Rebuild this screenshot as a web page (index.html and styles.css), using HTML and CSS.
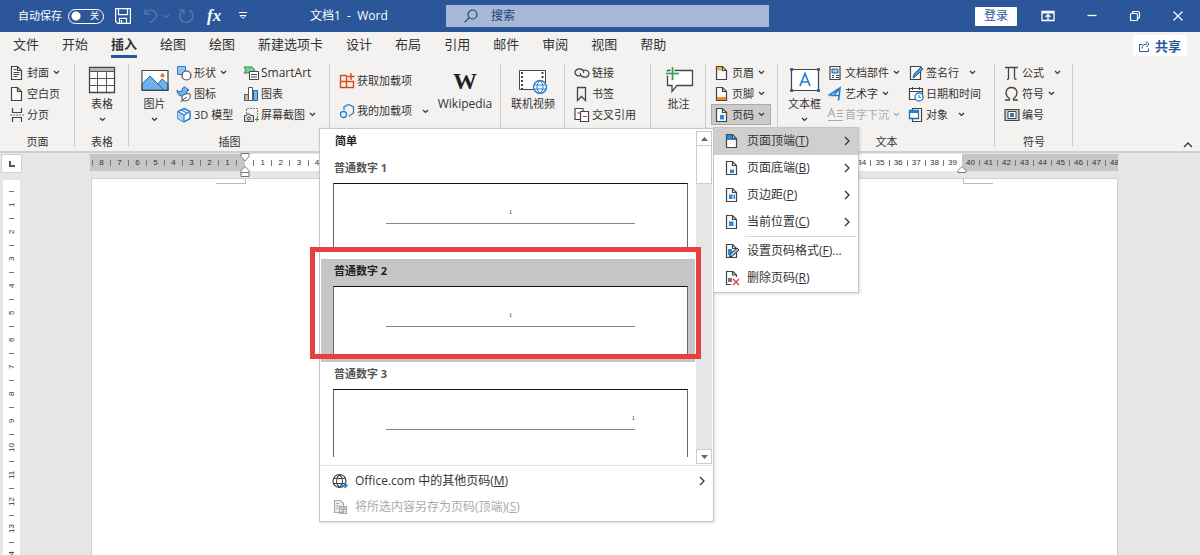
FILE: index.html
```html
<!DOCTYPE html>
<html lang="zh-CN">
<head>
<meta charset="utf-8">
<title>文档1 - Word</title>
<link rel="stylesheet" href="styles.css">
</head>
<body>
<svg class="defs" aria-hidden="true">
  <symbol id="chev" viewBox="0 0 7 5"><path d="M1 1l2.500 2.500L6 1" fill="none" stroke="currentColor" stroke-width="1.200"/></symbol>
  <symbol id="arrow" viewBox="0 0 6 10"><path d="M1 1l4 4-4 4" fill="none" stroke="#333" stroke-width="1.300"/></symbol>
  <symbol id="sheet" viewBox="0 0 16 16"><path d="M2.500 1.500h6l4 4v9h-10z" fill="#fafafa" stroke="#444" stroke-width="1.200"/><path d="M8.500 1.500v4h4" fill="none" stroke="#444" stroke-width="1.200"/></symbol>
</svg>

<header class="titlebar">
  <div class="quick">
    <label class="autosave"><span>自动保存</span><span class="switch"><input type="checkbox" role="switch"><span>关</span></span></label>
    <button class="save" aria-label="保存"><svg width="16" height="16" viewBox="0 0 16 16" fill="none" stroke="#fff" stroke-width="1.200"><path d="M.6.600h14.800v14.800H2.600l-2-2zM3.500.600v6h9v-6M4.500 15.400v-5h7v5M6.500 12v3"/></svg></button>
    <button class="undo" aria-label="撤消"><svg width="16" height="16" viewBox="0 0 16 16" fill="none" stroke="#5076b1" stroke-width="1.500"><path d="M2 1v5h5M2 6c2-4 7-5 10-2 4 4 0 7-5 11"/></svg><svg width="7" height="5" color="#5076b1"><use href="#chev"/></svg></button>
    <button class="redo" aria-label="重复"><svg width="16" height="16" viewBox="0 0 16 16" fill="none" stroke="#5076b1" stroke-width="1.500"><path d="M1 2h5v5M11 2a6.500 6.500 0 1 1-7 1l2-1"/></svg></button>
    <button class="fx" aria-label="公式"><i>fx</i></button>
    <button aria-label="自定义快速访问工具栏"><svg width="8" height="8" viewBox="0 0 8 8" fill="none" stroke="#fff"><path d="M0 .5h8M1 3.500h6L4 6.500z"/></svg></button>
  </div>
  <h1 class="doc-title">文档1&nbsp; -&nbsp; Word</h1>
  <label class="search"><svg width="14" height="14" viewBox="0 0 14 14" fill="none" stroke="#1f3f75" stroke-width="1.200"><circle cx="8.500" cy="5.500" r="4.500"/><path d="M5.300 8.700L.6 13.400"/></svg><input type="text" placeholder="搜索" aria-label="搜索"></label>
  <div class="window">
    <button class="login">登录</button>
    <button aria-label="功能区显示选项"><svg width="14" height="12" viewBox="0 0 14 12"><path d="M1 1.500h12v9H1z" fill="none" stroke="#fff" stroke-width="1.300"/><path d="M1 1h12v2.500H1z" fill="#fff"/><path d="M7 10V5M4.500 7L7 4.800 9.500 7" fill="none" stroke="#fff" stroke-width="1.400"/></svg></button>
    <button aria-label="最小化"><svg width="12" height="12" viewBox="0 0 12 12"><path d="M1.500 5.500h9" stroke="#fff" stroke-width="1.300"/></svg></button>
    <button aria-label="还原"><svg width="12" height="12" viewBox="0 0 12 12" fill="none" stroke="#fff" stroke-width="1.200"><rect x="1.500" y="3.500" width="7" height="7" rx="1"/><path d="M3.500 3V2.500q0-1 1-1H9q1.500 0 1.500 1.500v4q0 1-1.500 1.500"/></svg></button>
    <button aria-label="关闭"><svg width="12" height="12" viewBox="0 0 12 12" stroke="#fff" stroke-width="1.200"><path d="M1.500 1.500l9 9M10.500 1.500l-9 9"/></svg></button>
  </div>
</header>

<nav class="tabs">
  <button>文件</button><button>开始</button><button class="active">插入</button><button>绘图</button><button>绘图</button><button>新建选项卡</button><button>设计</button><button>布局</button><button>引用</button><button>邮件</button><button>审阅</button><button>视图</button><button>帮助</button>
  <button class="share"><svg width="12" height="12" viewBox="0 0 12 12" fill="none" stroke="#2b579a"><path d="M3.500 4.500h-3v7h9v-3M3 8.500c0-3 2-4.500 5-4.500M6.500 1.500L10 4 7.500 7"/></svg>共享</button>
</nav>

<section class="ribbon">
  <div class="group">
    <div class="body">
      <div class="col inset">
        <button class="row"><svg viewBox="0 0 16 16"><use href="#sheet"/><path d="M4.500 4.500h3M4.500 7.500h6M4.500 9.500h6M4.500 11.500h4" stroke="#444"/></svg>封面<svg class="chev"><use href="#chev"/></svg></button>
        <button class="row"><svg viewBox="0 0 16 16"><use href="#sheet"/></svg>空白页</button>
        <button class="row"><svg viewBox="0 0 16 16" fill="none" stroke="#444" stroke-width="1.200"><path d="M3.500 1v4.500h9V1M3.500 15v-4.500h9V15"/><path d="M1 8h15" stroke="#2b7fc9" stroke-dasharray="2 1"/></svg>分页</button>
      </div>
    </div>
    <div class="caption">页面</div>
  </div>
  <div class="group">
    <div class="body">
      <button class="big"><svg width="28" height="28" viewBox="0 0 28 28"><path d="M1.500 1.500h25v25h-25z" fill="#fff" stroke="#444" stroke-width="1.300"/><path d="M2 2h24v3.500H2z" fill="#b5b5b5"/><path d="M1.500 5.500h25M1.500 12.500h25M1.500 19.500h25M9.500 5.500v21M18.500 5.500v21" stroke="#555"/></svg>表格<svg class="chev"><use href="#chev"/></svg></button>
    </div>
    <div class="caption">表格</div>
  </div>
  <div class="group">
    <div class="body">
      <button class="big narrow"><svg width="28" height="28" viewBox="0 0 28 28"><path d="M1 4.500h26v20H1z" fill="#fff"/><path d="M1 18l8-8 8 8 4-5 6 5v6H1z" fill="#6fb1ea" stroke="#1f6bb0"/><path d="M15 16l8 8" stroke="#1f6bb0"/><path d="M1 4.500h26v20H1z" fill="none" stroke="#444" stroke-width="1.200"/><circle cx="21.500" cy="9.500" r="2" fill="#e8762d"/></svg>图片<svg class="chev"><use href="#chev"/></svg></button>
      <div class="col shapes">
        <button class="row"><svg viewBox="0 0 16 16"><path d="M1.500 1.500h8v8h-8z" fill="#8ec3ee" stroke="#2b7fc9"/><circle cx="10.500" cy="10.500" r="4.500" fill="#fff" stroke="#444" stroke-width="1.200"/></svg>形状<svg class="chev"><use href="#chev"/></svg></button>
        <button class="row"><svg viewBox="0 0 16 16"><path d="M1 4c2 2 4 2 5 1 0-5 4-5 5-2l2 1-2 1c0 4-3 5-6 5-3-1-4-4-4-6z" fill="#6fb1ea" stroke="#2067a8"/><path d="M6 14c-1-5 3-7 8-6 1 5-2 8-7 6.500zM5 16c2-3 4-4 6-5" fill="#fff" stroke="#444"/></svg>图标</button>
        <button class="row"><svg viewBox="0 0 16 16"><path d="M8 1.500l6 3v7l-6 3.500-6-3.500v-7z" fill="#fff" stroke="#2b7fc9" stroke-width="1.500"/><path d="M2 4.500L8 8v7L2 11.500z" fill="#a9d2f3"/><path d="M2 4.500L8 8l6-3.500M8 8v7M5 3l6 3" fill="none" stroke="#2b7fc9" stroke-width="1.200"/></svg>3D 模型</button>
      </div>
      <div class="col">
        <button class="row latin"><svg viewBox="0 0 16 16"><path d="M1 2h8l3 3-3 3H1l2-3z" fill="#7fcf9a" stroke="#2c8a4b"/><path d="M6.500 6.500h9v8h-9z" fill="#fff" stroke="#444"/><path d="M8 9.500h6M8 12h6" stroke="#444"/></svg>SmartArt</button>
        <button class="row"><svg viewBox="0 0 16 16"><path d="M1.500 8.500h4v6h-4z" fill="#bbb" stroke="#555"/><path d="M5.500 1.500h4v13h-4z" fill="#fff" stroke="#555"/><path d="M10.500 4.500h4v10h-4z" fill="#6fb1ea" stroke="#2067a8"/></svg>图表</button>
        <button class="row"><svg viewBox="0 0 16 16" fill="none"><path d="M3.500 7V1.500h11V13" stroke="#777" stroke-dasharray="2 1"/><path d="M1.500 8.500h2l1-1.500h2l1 1.500h3v6h-9z" fill="#ddd" stroke="#444"/><circle cx="6" cy="11.500" r="1.500" stroke="#444"/><path d="M12 12.500h4M14 10.500v4" stroke="#2c8a4b"/></svg>屏幕截图<svg class="chev"><use href="#chev"/></svg></button>
      </div>
    </div>
    <div class="caption">插图</div>
  </div>
  <div class="group">
    <div class="body">
      <div class="col loose inset">
        <button class="row"><svg viewBox="0 0 16 16" fill="none" stroke="#d8491c" stroke-width="1.400"><path d="M8 2.500H1.500v12h13V8M1.500 8.500h13M7.500 2.500v12"/><path d="M12 0v7M8.500 3.500h7"/></svg>获取加载项</button>
        <button class="row"><svg viewBox="0 0 16 16" fill="none" stroke="#2b7fc9" stroke-width="1.300"><path d="M5 7V4l4.500-2.500L14.500 4v6L10 13"/><circle cx="4.500" cy="11.500" r="3"/></svg>我的加载项<svg class="chev far"><use href="#chev"/></svg></button>
      </div>
      <button class="big wiki latin"><span class="w">W</span>Wikipedia</button>
    </div>
  </div>
  <div class="group">
    <div class="body">
      <button class="big"><svg width="30" height="28" viewBox="0 0 30 28"><path d="M1.500 4.500h26v19h-26z" fill="#fff" stroke="#444"/><path d="M4 6v17M24.500 6v8" stroke="#444" stroke-width="2" stroke-dasharray="2 2"/><circle cx="22" cy="21" r="6.500" fill="#fff" stroke="#2b7fc9" stroke-width="1.400"/><path d="M22 14.500c-4 4-4 9 0 13 4-4 4-9 0-13M16 19h12M16 23h12" fill="none" stroke="#2b7fc9"/></svg>联机视频</button>
    </div>
  </div>
  <div class="group">
    <div class="body">
      <div class="col inset">
        <button class="row"><svg viewBox="0 0 16 16" fill="none" stroke="#444" stroke-width="1.300"><path d="M7 10.500c-3 1-6-.5-6-3s3-4 5.500-3.500S10 6.500 9.500 8M8.500 5.500c3-1 6.500 0 6.500 3s-3 4-5.500 3.500S6 9.500 6.500 8"/></svg>链接</button>
        <button class="row"><svg viewBox="0 0 16 16" fill="none" stroke="#444" stroke-width="1.300"><path d="M3.500 1.500h8v13l-4-4-4 4z"/></svg>书签</button>
        <button class="row"><svg viewBox="0 0 16 16" fill="#fff" stroke="#444" stroke-width="1.200"><path d="M1 1.500h8v11H1z"/><path d="M6.500 4.500h8v10h-8z"/><path d="M3 6h3M9 9.500h4" stroke="#d13438"/></svg>交叉引用</button>
      </div>
    </div>
  </div>
  <div class="group">
    <div class="body">
      <button class="big"><svg width="30" height="28" viewBox="0 0 30 28"><path d="M3.500 4.500h25v15H13l-5 6v-6H3.500z" fill="#fff" stroke="#444" stroke-width="1.300"/><path d="M8.500 0v15M1 7.500h15" stroke="#f3f2f1" stroke-width="4"/><path d="M8.500 1v13M2 7.500h13" stroke="#2ca04b" stroke-width="1.600"/></svg>批注</button>
    </div>
  </div>
  <div class="group">
    <div class="body">
      <div class="col menus">
        <button class="row"><svg viewBox="0 0 16 16"><use href="#sheet"/><path d="M3 2h5v3.500H3z" fill="#f3ae4b"/></svg>页眉<svg class="chev"><use href="#chev"/></svg></button>
        <button class="row"><svg viewBox="0 0 16 16"><use href="#sheet"/><path d="M3 11h9v3H3z" fill="#f08c2a"/></svg>页脚<svg class="chev"><use href="#chev"/></svg></button>
        <button class="row pressed"><svg viewBox="0 0 16 16"><use href="#sheet"/><path d="M6 8h4v4.500H6z" fill="#2b88d8"/></svg>页码<svg class="chev"><use href="#chev"/></svg></button>
      </div>
    </div>
  </div>
  <div class="group">
    <div class="body">
      <button class="big textbox"><svg width="30" height="28" viewBox="0 0 30 28"><path d="M1.500 3.500h27v21h-27z" fill="#fff" stroke="#444" stroke-width="1.200"/><path d="M0 2h3v3H0zM27 2h3v3h-3zM0 23h3v3H0zM27 23h3v3h-3z" fill="#2b6ca8"/><path d="M10 20l5-12.500L20 20M12 16h6" fill="none" stroke="#2b7fc9" stroke-width="1.700"/></svg>文本框<svg class="chev"><use href="#chev"/></svg></button>
      <div class="col parts">
        <button class="row"><svg viewBox="0 0 16 16"><path d="M3 1.500h10v13H3z" fill="#fff" stroke="#444" stroke-width="1.200"/><path d="M5 4h6v4H5z" fill="#9bcaf0" stroke="#2b579a"/><path d="M5 10.500h2M9 10.500h3M5 12.500h2M9 12.500h3" stroke="#444"/></svg>文档部件<svg class="chev"><use href="#chev"/></svg></button>
        <button class="row"><svg viewBox="0 0 16 16" fill="none" stroke="#2b7fc9" stroke-width="1.700"><path d="M1.500 9.500L13 2l-1.500 12.500M13 2L6.500 9.500M3.500 9.500h8.500"/></svg>艺术字<svg class="chev"><use href="#chev"/></svg></button>
        <button class="row" disabled><svg viewBox="0 0 16 16" fill="none" stroke="#aaa" stroke-width="1.200"><path d="M1 10l3.500-8L8 10M2 7h5M10 3.500h6M10 6.500h6M10 9.500h6M1 13.500h15"/></svg>首字下沉<svg class="chev"><use href="#chev"/></svg></button>
      </div>
      <div class="col">
        <button class="row"><svg viewBox="0 0 16 16"><path d="M2.500 1.500h10v13h-10z" fill="#fff" stroke="#444" stroke-width="1.200"/><path d="M5 13l1-4 7-7 2 2-7 7z" fill="#4ba0e0" stroke="#1f5c94"/></svg>签名行<svg class="chev mid"><use href="#chev"/></svg></button>
        <button class="row"><svg viewBox="0 0 16 16"><path d="M1.500 2.500h13v11h-13z" fill="#fff" stroke="#444" stroke-width="1.200"/><path d="M1.500 5.500h13M4.500 1v3M11.500 1v3" stroke="#444"/><circle cx="11" cy="11" r="4" fill="#fff" stroke="#2b7fc9" stroke-width="1.300"/><path d="M11 9v2.500h2" fill="none" stroke="#2b7fc9"/></svg>日期和时间</button>
        <button class="row"><svg viewBox="0 0 16 16"><path d="M4.500 1.500h9v13h-9z" fill="#fff" stroke="#444" stroke-width="1.200"/><path d="M1.500 3.500h9v8h-9z" fill="#fff" stroke="#1f6bb0" stroke-width="1.300"/><path d="M1 3h10v3H1z" fill="#1f7ec8"/></svg>对象<svg class="chev mid"><use href="#chev"/></svg></button>
      </div>
    </div>
    <div class="caption">文本</div>
  </div>
  <div class="group">
    <div class="body">
      <div class="col inset">
        <button class="row"><svg viewBox="0 0 16 16" fill="none" stroke="#444" stroke-width="1.300"><path d="M1 2.500h13M4.500 2.500v11q0 1-1.500 1M10.500 2.500v10q0 2 2 1.500"/></svg>公式<svg class="chev mid"><use href="#chev"/></svg></button>
        <button class="row"><svg viewBox="0 0 16 16" fill="none" stroke="#444" stroke-width="1.300"><path d="M1 14h4.500v-1.500C0 9 1.500 1.500 7.500 1.500S15 9 9.500 12.500V14H14"/></svg>符号<svg class="chev"><use href="#chev"/></svg></button>
        <button class="row"><svg viewBox="0 0 16 16"><path d="M1 2.500h14v11H1z" fill="#ccc" stroke="#444" stroke-width="1.200"/><path d="M4 4.500h8v7H4z" fill="#fff" stroke="#444"/><path d="M6 6h4v4H6z" fill="#2b7fc9"/></svg>编号</button>
      </div>
    </div>
    <div class="caption">符号</div>
  </div>
  <button class="collapse" aria-label="折叠功能区"><svg width="10" height="6" viewBox="0 0 10 6" fill="none" stroke="#333" stroke-width="1.300"><path d="M1 5l4-4 4 4"/></svg></button>
</section>

<main class="workspace">
  <div class="top-rule">
    <span class="tab-stop"><svg width="6" height="6" viewBox="0 0 6 6"><path d="M1 0v5h5" fill="none" stroke="#555" stroke-width="2"/></svg></span>
    <div class="h-ruler">
      <div class="scale before"></div>
      <div class="scale text"></div>
      <div class="scale after"></div>
      <svg class="indent left" width="10" height="24" viewBox="0 0 10 24" fill="#fff" stroke="#777"><path d="M1 .5h8v3L5 8 1 3.500zM5 13.500l4 4v2H1v-2zM1 19.500h8v4H1z"/></svg>
      <svg class="indent right" width="10" height="24" viewBox="0 0 10 24" fill="#fff" stroke="#777"><path d="M5 13.500l4 4v2H1v-2z"/></svg>
    </div>
  </div>
  <div class="canvas">
    <div class="v-ruler"></div>
    <article class="page"><span class="corner start"></span><span class="corner end"></span></article>
  </div>
</main>

<section class="gallery" aria-label="页面顶端">
  <div class="scroller">
    <div class="list">
      <h2>简单</h2>
      <button class="choice"><strong>普通数字 1</strong><span class="preview"><span>1</span></span></button>
      <button class="choice selected"><strong>普通数字 2</strong><span class="preview"><span>1</span></span></button>
      <button class="choice right"><strong>普通数字 3</strong><span class="preview"><span>1</span></span></button>
    </div>
    <div class="scrollbar">
      <button aria-label="向上滚动"><svg width="7" height="4"><path d="M0 4l3.500-4L7 4z" fill="#666"/></svg></button>
      <span class="thumb"></span>
      <button class="down" aria-label="向下滚动"><svg width="7" height="4"><path d="M0 0l3.500 4L7 0z" fill="#666"/></svg></button>
    </div>
  </div>
  <div class="more">
    <button><svg width="16" height="16" viewBox="0 0 16 16" fill="none" stroke="#444" stroke-width="1.200"><circle cx="7.500" cy="8" r="6.500"/><path d="M7.500 1.500c-4 4-4 9 0 13 4-4 4-9 0-13M1.500 5.500h12M1.500 10.500h12"/><path d="M8 12.500h7M12.500 10l2.500 2.500-2.500 2.500" stroke="#2b7fc9" stroke-width="1.500"/></svg><span>Office.com 中的其他页码(<u>M</u>)</span><svg class="go"><use href="#arrow"/></svg></button>
    <button disabled><svg width="16" height="16" viewBox="0 0 16 16" fill="#eee" stroke="#aaa" stroke-width="1.200"><path d="M2.500 1.500h6l3 3v9h-9zM4 4.500h3M4 7h3M4 9.500h2M7.500 7.500h7v7h-7zM9 7.500v3h4v-3M9.500 12.500h3"/></svg><span>将所选内容另存为页码(顶端)(<u>S</u>)</span></button>
  </div>
</section>

<section class="submenu" aria-label="页码">
  <button class="hover"><svg width="16" height="16" viewBox="0 0 16 16"><use href="#sheet"/><path d="M3 2h5v4h4v1H3z" fill="#2b88d8"/></svg><span>页面顶端(<u>T</u>)</span><svg class="go"><use href="#arrow"/></svg></button>
  <button><svg width="16" height="16" viewBox="0 0 16 16"><use href="#sheet"/><path d="M6 9.500h4V13H6z" fill="#2b88d8"/></svg><span>页面底端(<u>B</u>)</span><svg class="go"><use href="#arrow"/></svg></button>
  <button><svg width="16" height="16" viewBox="0 0 16 16"><use href="#sheet"/><path d="M5 7.500h3.500V12H5zM9.500 7.500H11V12H9.500z" fill="#2b88d8"/></svg><span>页边距(<u>P</u>)</span><svg class="go"><use href="#arrow"/></svg></button>
  <button><svg width="16" height="16" viewBox="0 0 16 16"><use href="#sheet"/><path d="M5 7.500h4.500V12H5z" fill="#2b88d8"/></svg><span>当前位置(<u>C</u>)</span><svg class="go"><use href="#arrow"/></svg></button>
  <hr>
  <button><svg width="16" height="16" viewBox="0 0 16 16"><use href="#sheet"/><path d="M4 6h4v6H4z" fill="#2b88d8"/><path d="M5.500 14l1-3.500L13 5l2 2-6.500 6z" fill="#7dbcf0" stroke="#333"/></svg><span>设置页码格式(<u>F</u>)...</span></button>
  <button><svg width="16" height="16" viewBox="0 0 16 16"><path d="M12.500 7V5L9 1.500H2.500v13H7M8.500 1.500V5h4" fill="none" stroke="#444" stroke-width="1.200"/><path d="M4 8h4v4H4z" fill="#777"/><path d="M9 9l6 6M15 9l-6 6" stroke="#e03a3a" stroke-width="1.300"/></svg><span>删除页码(<u>R</u>)</span></button>
</section>

<div class="highlight"></div>
<script src="ruler.js"></script>
</body>
</html>
```

FILE: styles.css
```css
* { box-sizing: border-box; }
body {
  margin: 0;
  height: 100vh;
  overflow: hidden;
  position: relative;
  display: flex;
  flex-direction: column;
  background: #e6e6e6;
  color: #333;
  font: 12px/16px "Open Sans", "Noto Sans CJK SC", sans-serif;
}
button {
  font: inherit;
  color: inherit;
  background: none;
  border: 0;
  padding: 0;
  display: flex;
  align-items: center;
  white-space: nowrap;
}
svg { display: block; flex: none; }
.defs { position: absolute; width: 0; height: 0; }

/* Title bar */
.titlebar {
  flex: none;
  height: 32px;
  display: grid;
  grid-template-columns: 310fr 136fr 323fr 431fr;
  align-items: center;
  background: #2b579a;
  color: #fff;
}
.quick { display: flex; align-items: center; padding-left: 18px; }
.autosave { display: flex; align-items: center; gap: 6px; font-size: 11px; white-space: nowrap; }
.switch { position: relative; display: flex; }
.switch input {
  appearance: none;
  margin: 0;
  width: 36px;
  height: 15px;
  border: 1px solid #fff;
  border-radius: 8px;
  background: radial-gradient(circle at 7px 6px, #fff 4px, transparent 5px);
}
.switch span { position: absolute; right: 5px; top: 0; font-size: 9px; line-height: 14px; }
.save { margin-left: 11px; }
.undo { margin-left: 12px; gap: 4px; }
.redo { margin-left: 8px; }
.fx { margin: 0 18px 0 13px; font: bold 17px/20px "Liberation Serif", serif; }
.doc-title { margin: 0; font-size: 12px; font-weight: 400; white-space: nowrap; }
.search {
  display: flex;
  align-items: center;
  gap: 13px;
  height: 22px;
  padding-left: 18px;
  background: #a5b9d6;
}
.search input { flex: 1; min-width: 0; padding: 0; border: 0; outline: 0; background: none; font: inherit; color: #1f3f75; }
.search input::placeholder { color: #1f3f75; opacity: 1; }
.window { display: flex; align-items: center; justify-content: flex-end; gap: 31px; padding-right: 16px; }
.login { height: 19px; padding: 0 9px; margin-right: -7px; background: #fff; color: #2b579a; border-radius: 1px; }

/* Tabs */
.tabs {
  flex: none;
  height: 28px;
  display: flex;
  gap: 23px;
  padding: 0 13px;
  background: #f3f2f1;
  font-size: 13px;
}
.tabs button { border-bottom: 3px solid transparent; height: 26px; }
.tabs .active { font-weight: 700; border-color: #2b579a; }
.tabs .share {
  gap: 4px;
  height: 21px;
  margin: 3px 0 0 auto;
  padding: 0 6px;
  border: 0;
  background: #fff;
  color: #2b579a;
  font-weight: 700;
}

/* Ribbon */
.ribbon {
  flex: none;
  display: grid;
  grid-template-columns: 75px 54px 201px 171px 64px 86px 55px 72px 217px 78px 1fr;
  height: 91px;
  background: #f3f2f1;
  font-size: 11px;
}
.group { position: relative; display: flex; flex-direction: column; padding-top: 2px; min-width: 0; }
.group::after { content: ""; position: absolute; right: 0; top: 4px; bottom: 4px; width: 1px; background: #cfcdcb; }
.body { display: flex; height: 64px; }
.caption { padding-top: 8px; text-align: center; }
.col { display: flex; flex-direction: column; }
.inset { padding-left: 9px; }
.row { height: 21px; gap: 2px; }
.latin { font-size: 12px; }
.row > svg:first-child { width: 16px; height: 16px; }
.row:disabled { color: #aaa; }
.chev { width: 7px; height: 5px; }
.row .chev { margin-left: 2px; }
.row .chev.mid { margin-left: 8px; }
.row .chev.far { margin-left: 8px; }
.loose { padding-top: 9px; gap: 10px; }
.loose .row { height: 20px; }
.big { flex: 1; flex-direction: column; padding-top: 4px; }
.big > svg:first-child { margin-bottom: 2px; }
.big .chev { margin-top: 5px; }
.narrow { flex: none; width: 47px; padding-left: 4px; }
.shapes { width: 67px; }
.w { font: bold 24px/30px "Liberation Serif", serif; color: #222; }
.menus { flex: 1; padding: 0 7px 0 5px; }
.menus .row { padding-left: 2px; border: 1px solid transparent; }
.menus .pressed { background: #cdcbc9; border-color: #aaa; }
.textbox { flex: none; width: 49px; padding-left: 4px; }
.parts { width: 81px; }
.collapse { align-self: end; justify-self: end; padding: 0 7px 3px; }

/* Rulers and page */
.workspace { flex: 1; min-height: 0; display: flex; flex-direction: column; border-top: 2px solid #cfcfcf; }
.top-rule { flex: none; display: flex; height: 25px; padding: 1px 82px 0 1px; }
.tab-stop {
  display: flex;
  align-items: center;
  justify-content: center;
  width: 21px;
  height: 19px;
  margin-right: 68px;
  background: #fff;
  border: 1px solid #d2d2d2;
}
.h-ruler {
  position: relative;
  flex: 1;
  height: 17px;
  display: grid;
  grid-template-columns: 155fr 717fr 156fr;
  font: 8px/17px "Liberation Sans", sans-serif;
}
.scale { display: flex; min-width: 0; overflow: hidden; background: #c6c6c6; }
.scale span { flex: none; width: 9px; display: flex; align-items: center; justify-content: center; }
.scale .tick::before { content: ""; width: 1px; height: 6px; background: #777; }
.scale.before { justify-content: flex-end; padding-right: 4px; }
.scale.text { background: #fff; padding: 0 5px 0 4px; }
.scale.text span { flex: 1 1 0; min-width: 0; }
.scale.after { padding-left: 4px; }
.indent { position: absolute; top: -1px; }
.indent.left { left: 150px; }
.indent.right { right: 151px; }
.canvas { flex: 1; min-height: 0; display: flex; padding-right: 82px; }
.v-ruler {
  width: 17px;
  margin: 2px 71px 0 3px;
  padding-top: 5px;
  overflow: hidden;
  background: #fff;
  font: 8px/17px "Liberation Sans", sans-serif;
}
.v-ruler div { height: 27px; display: flex; flex-direction: column; align-items: center; }
.v-ruler div::before { content: ""; width: 5px; height: 1px; margin: 6px 0; background: #777; }
.v-ruler span { height: 14px; text-align: center; writing-mode: vertical-rl; transform: rotate(180deg); }
.page { position: relative; flex: 1; background: #fff; border: 1px solid #d2d2d2; border-bottom: 0; }
.corner { position: absolute; top: 0; width: 30px; height: 5px; border-bottom: 1px solid #bbb; }
.corner.start { left: 124px; border-right: 1px solid #bbb; }
.corner.end { right: 124px; border-left: 1px solid #bbb; }

/* Gallery drop-down */
.gallery {
  position: absolute;
  left: 319px;
  top: 128px;
  width: 395px;
  background: #fff;
  border: 1px solid #c6c6c6;
  box-shadow: 1px 1px 3px #0002;
}
.scroller { display: flex; border-bottom: 1px solid #e1e1e1; }
.list { flex: 1; padding-left: 1px; }
.list h2 { margin: 0; padding: 4px 14px 7px; font-size: 11px; line-height: 16px; color: #222; }
.choice { width: 100%; height: 103px; flex-direction: column; align-items: stretch; padding: 4px 7px 0 12px; text-align: left; }
.choice strong { font-size: 11px; line-height: 16px; color: #555; padding-left: 1px; }
.preview {
  display: block;
  height: 68px;
  margin-top: 7px;
  padding: 0 52px;
  background: #fff;
  border: 1px solid #666;
  border-top-color: #111;
  border-bottom: 0;
}
.preview span {
  display: block;
  height: 40px;
  padding-top: 20px;
  border-bottom: 1px solid #888;
  font: 7px/16px "Liberation Serif", serif;
  text-align: center;
}
.right .preview span { text-align: right; }
.selected { background: #c5c5c5; }
.selected strong { color: #222; }
.scrollbar { width: 16px; margin: 2px 1px 1px; display: flex; flex-direction: column; background: #e6e6e6; }
.scrollbar button { height: 15px; justify-content: center; background: #fff; border: 1px solid #ccc; }
.thumb { height: 38px; background: #fff; border: 1px solid #ccc; border-top: 0; }
.down { margin-top: auto; }
.more { padding: 2px 0 1px; }
.more button { width: 100%; height: 26px; gap: 7px; padding: 0 8px 0 12px; }
.more button:disabled { color: #aaa; }
.go { width: 6px; height: 10px; margin-left: auto; }

/* Page number menu */
.submenu {
  position: absolute;
  left: 713px;
  top: 127px;
  width: 146px;
  background: #fff;
  border: 1px solid #c6c6c6;
  box-shadow: 1px 1px 3px #0002;
}
.submenu button { width: 100%; height: 27px; gap: 7px; padding: 0 8px 2px 10px; }
.submenu .hover { background: #cfcfcf; }
.submenu hr { height: 1px; margin: 0 2px 1px 31px; border: 0; background: #d8d8d8; }

/* Callout frame */
.highlight { position: absolute; left: 310px; top: 247px; width: 391px; height: 112px; border: 5px solid #e93f3f; }
```

FILE: ruler.js
```js
const tick = '<span class="tick"></span>';
const num = n => `<span>${n}</span>`;
const range = (a, b) => Array.from({ length: b - a + 1 }, (_, i) => a + i);

document.querySelector('.scale.before').innerHTML =
  tick + range(1, 8).reverse().map(n => num(n) + tick).join('');
document.querySelector('.scale.text').innerHTML =
  range(1, 39).map(n => tick + num(n)).join('');
document.querySelector('.scale.after').innerHTML =
  range(40, 48).map(num).join(tick);
document.querySelector('.v-ruler').innerHTML =
  range(1, 14).map(n => `<div>${num(n)}</div>`).join('');
```
